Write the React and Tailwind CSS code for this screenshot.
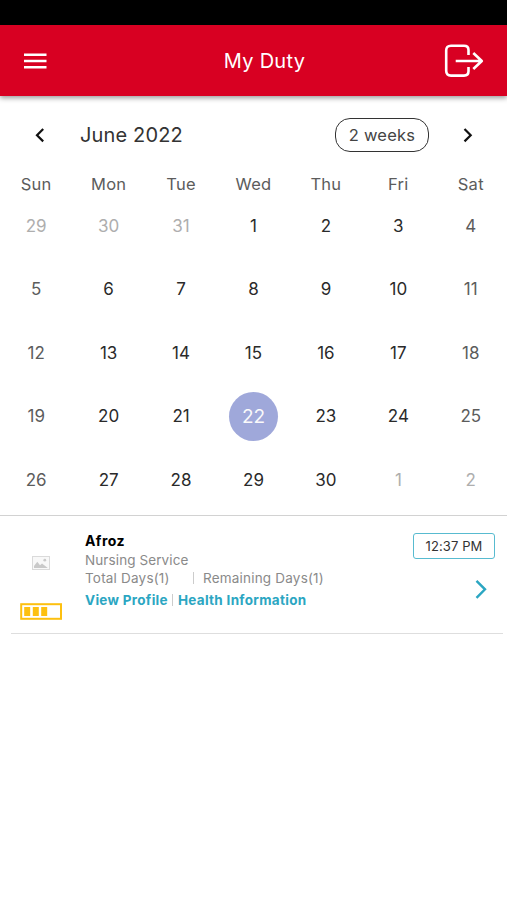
const weekdays = ["Sun", "Mon", "Tue", "Wed", "Thu", "Fri", "Sat"];
const days = [29, 30, 31, ...Array.from({ length: 30 }, (_, i) => i + 1), 1, 2];

function Day({ value, index }) {
  const outside = index < 3 || index > 32;
  const weekend = index % 7 === 0 || index % 7 === 6;
  if (!outside && value === 22) {
    return (
      <div className="flex items-center justify-center">
        <span className="flex size-[49px] items-center justify-center rounded-full bg-[#9fa8da] pt-px text-[19px] text-[#fafafa]">22</span>
      </div>
    );
  }
  const color = outside ? "text-[#aeaeae]" : weekend ? "text-[#5c5c5c]" : "text-[#2a2a2a]";
  return <div className={`flex items-center justify-center pt-px ${color}`}>{value}</div>;
}

function Header() {
  return (
    <header className="relative z-10 flex h-[71px] items-center justify-between bg-[#d80022] pr-[23px] pl-6 text-white shadow-[0_2px_5px_rgba(0,0,0,0.4)]">
      <svg className="h-4 w-[23px]" viewBox="0 0 23 16" fill="currentColor">
        <path d="M0 .5h22.5v2.4H0zM0 6.8h22.5v2.4H0zM0 13.1h22.5v2.4H0z" />
      </svg>
      <h1 className="ml-[38px] text-[20px] tracking-[0.3px]">My Duty</h1>
      <svg className="h-[34px] w-[40px]" viewBox="0 0 40 34" fill="none" stroke="currentColor" strokeWidth="2.6" strokeLinecap="butt" strokeLinejoin="round">
        <path d="M24.5 11V6Q24.5 1.7 20 1.7H7Q2.2 1.7 2.2 6.5V26.8Q2.2 31.6 7 31.6H20Q24.5 31.6 24.5 27.3V23" />
        <path d="M11.7 17H38M29.3 9L37.8 17L29.3 25" />
      </svg>
    </header>
  );
}

export default function App() {
  return (
    <main className="flex h-[900px] w-[507px] flex-col overflow-hidden bg-white font-['Inter',sans-serif]">
      <div className="h-[25px] shrink-0 bg-black" />
      <Header />
      <section className="border-b border-[#d2d2d2]">
        <div className="flex h-[78px] items-center pr-[33px] pl-[34px]">
          <svg className="h-4 w-3" viewBox="0 0 12 16" fill="none" stroke="#111" strokeWidth="2.2">
            <path d="M9.2 2L3 8.2l6.2 6.2" />
          </svg>
          <h2 className="ml-[34px] text-[20px] tracking-[0.15px] text-[#333]">June 2022</h2>
          <button className="ml-auto flex h-[34px] w-[94px] items-center justify-center rounded-[15px] border-[1.5px] border-[#333] text-[16.5px] tracking-[0.2px] text-[#444]">2 weeks</button>
          <svg className="ml-[33px] h-4 w-3" viewBox="0 0 12 16" fill="none" stroke="#111" strokeWidth="2.2">
            <path d="M2.5 2L8.7 8.2l-6.2 6.2" />
          </svg>
        </div>
        <div className="grid h-5 grid-cols-7 text-center text-[16.5px] leading-5 tracking-[0.25px] text-[#5c5c5c]">
          {weekdays.map((d) => <div key={d}>{d}</div>)}
        </div>
        <div className="grid h-[321px] grid-cols-7 auto-rows-[63.5px] text-[17px]">
          {days.map((d, i) => <Day key={i} value={d} index={i} />)}
        </div>
      </section>
      <article className="mr-1 ml-[11px] flex h-[118px] border-b border-[#dedede]">
        <div className="flex w-[60px] flex-col items-center pt-10">
          <svg className="h-[14px] w-[18px]" viewBox="0 0 18 14">
            <rect x=".5" y=".5" width="17" height="13" fill="#f8f8f8" stroke="#dadada" />
            <path d="M2 12V10l3.3-4.2L8 9.2l2-1.7 5.8 4.5z" fill="#c9c9c9" />
            <circle cx="12.8" cy="4.2" r="1.4" fill="#c9c9c9" />
          </svg>
          <svg className="mt-[33px] h-[17px] w-[42px]" viewBox="0 0 42 17" fill="#fdc010">
            <rect x="1.2" y="1.2" width="39.8" height="14.6" fill="none" stroke="#fdc010" strokeWidth="2" />
            <path d="M4.2 4h6v9h-6zM12.8 4h6v9h-6zM21.2 4h6v9h-6z" />
          </svg>
        </div>
        <div className="ml-[14px] flex flex-col pt-4 text-[13.5px] tracking-[0.2px] text-[#8a8a8a]">
          <strong className="h-[19px] text-[14px] leading-[18px] font-bold tracking-[0.5px] text-black">Afroz</strong>
          <span className="h-[18px] leading-[19px] tracking-[0.1px]">Nursing Service</span>
          <div className="flex h-[18px] items-center leading-[18px]">
            <span className="w-[108px]">Total Days(1)</span>
            <span className="mr-[9px] h-3 w-px bg-[#ccc]" />
            <span>Remaining Days(1)</span>
          </div>
          <div className="mt-1 flex h-[18px] items-center leading-[18px] font-bold tracking-[0.3px] text-[#2ba6c2]">
            <a>View Profile</a>
            <span className="mr-[5px] ml-1 h-3 w-px bg-[#ccc]" />
            <a>Health Information</a>
          </div>
        </div>
        <div className="mr-2 ml-auto flex flex-col items-end pt-[17px]">
          <time className="flex h-[26px] w-[82px] items-center justify-center rounded-[3px] border-[1.5px] border-[#58bbd0] pt-px text-[13px] tracking-[0.1px] text-[#333]">12:37 PM</time>
          <svg className="mt-[20px] mr-[7px] h-5 w-[14px]" viewBox="0 0 14 20" fill="none" stroke="#2ba6c2" strokeWidth="2.4">
            <path d="M2.5 1.8L11 10.3L2.5 18.8" />
          </svg>
        </div>
      </article>
    </main>
  );
}
